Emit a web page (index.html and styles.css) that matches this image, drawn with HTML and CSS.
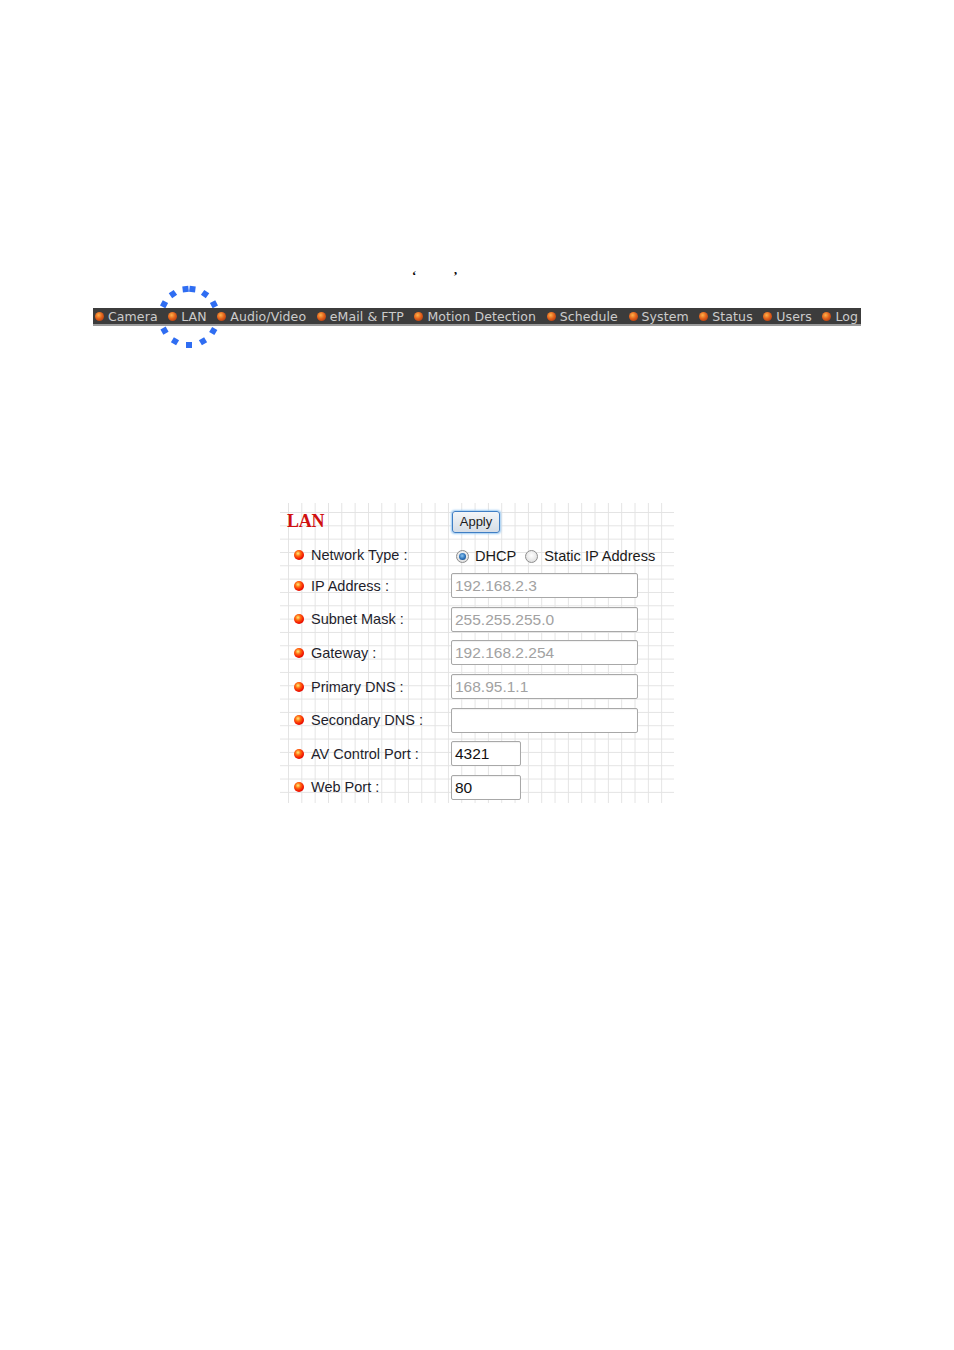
FILE: index.html
```html
<!DOCTYPE html>
<html>
<head>
<meta charset="utf-8">
<link rel="stylesheet" href="styles.css">
</head>
<body>
<div class="page">
  <div class="quotes"><span>‘</span><span>’</span></div>

  <div class="navwrap">
    <svg class="ring" width="70" height="70" viewBox="-35 -35 70 70">
      <g fill="#2f6df2">
        <rect x="25" y="-3" width="6" height="6" transform="rotate(-27)"/>
        <rect x="25" y="-3" width="6" height="6" transform="rotate(-55)"/>
        <rect x="25" y="-3" width="6" height="6" transform="rotate(-83)"/>
        <rect x="25" y="-3" width="6" height="6" transform="rotate(-97)"/>
        <rect x="25" y="-3" width="6" height="6" transform="rotate(-125)"/>
        <rect x="25" y="-3" width="6" height="6" transform="rotate(-153)"/>
        <rect x="25" y="-3" width="6" height="6" transform="rotate(-209)"/>
        <rect x="25" y="-3" width="6" height="6" transform="rotate(-240)"/>
        <rect x="25" y="-3" width="6" height="6" transform="rotate(-270)"/>
        <rect x="25" y="-3" width="6" height="6" transform="rotate(-300)"/>
        <rect x="25" y="-3" width="6" height="6" transform="rotate(-330)"/>
      </g>
    </svg>
    <nav class="nav">
      <span class="nav-item"><i class="ball"></i>Camera</span>
      <span class="nav-item"><i class="ball"></i>LAN</span>
      <span class="nav-item"><i class="ball"></i>Audio/Video</span>
      <span class="nav-item"><i class="ball"></i>eMail &amp; FTP</span>
      <span class="nav-item"><i class="ball"></i>Motion Detection</span>
      <span class="nav-item"><i class="ball"></i>Schedule</span>
      <span class="nav-item"><i class="ball"></i>System</span>
      <span class="nav-item"><i class="ball"></i>Status</span>
      <span class="nav-item"><i class="ball"></i>Users</span>
      <span class="nav-item"><i class="ball"></i>Log</span>
    </nav>
  </div>

  <div class="panel">
    <div class="title">LAN</div>
    <div class="val"><button class="apply">Apply</button></div>

    <div class="dot-cell"><i class="dot"></i></div>
    <div class="label">Network Type :</div>
    <div class="val radios">
      <span class="radio checked"></span><span class="rtext">DHCP</span>
      <span class="radio"></span><span class="rtext">Static IP Address</span>
    </div>

    <div class="dot-cell"><i class="dot"></i></div>
    <div class="label">IP Address :</div>
    <div class="val"><div class="field wide muted">192.168.2.3</div></div>

    <div class="dot-cell"><i class="dot"></i></div>
    <div class="label">Subnet Mask :</div>
    <div class="val"><div class="field wide muted">255.255.255.0</div></div>

    <div class="dot-cell"><i class="dot"></i></div>
    <div class="label">Gateway :</div>
    <div class="val"><div class="field wide muted">192.168.2.254</div></div>

    <div class="dot-cell"><i class="dot"></i></div>
    <div class="label">Primary DNS :</div>
    <div class="val"><div class="field wide muted">168.95.1.1</div></div>

    <div class="dot-cell"><i class="dot"></i></div>
    <div class="label">Secondary DNS :</div>
    <div class="val"><div class="field wide"></div></div>

    <div class="dot-cell"><i class="dot"></i></div>
    <div class="label">AV Control Port :</div>
    <div class="val"><div class="field short">4321</div></div>

    <div class="dot-cell"><i class="dot"></i></div>
    <div class="label">Web Port :</div>
    <div class="val"><div class="field short">80</div></div>
  </div>
</div>
</body>
</html>
```

FILE: styles.css
```css
html, body {
  margin: 0;
  padding: 0;
  background: #ffffff;
}

.page {
  font-family: "Liberation Sans", Arial, sans-serif;
  color: #222;
}

.quotes {
  margin-top: 269px;
  height: 14px;
  padding-left: 412px;
  display: flex;
  gap: 37px;
  font-family: "Liberation Serif", serif;
  font-weight: bold;
  font-size: 13px;
  line-height: 14px;
  color: #000;
}

.navwrap {
  position: relative;
  margin-top: 25px;
  margin-left: 93px;
  width: 768px;
}

.ring {
  position: absolute;
  left: 61px;
  top: -26px;
  z-index: 0;
}

.nav {
  position: relative;
  z-index: 1;
  display: flex;
  align-items: center;
  gap: 10.6px;
  height: 16px;
  padding-left: 2px;
  background: #3c3c3c;
  border-bottom: 2px solid #9a9a9a;
  font-family: "DejaVu Sans", Verdana, sans-serif;
  font-size: 12.5px;
  letter-spacing: 0.1px;
  color: #cccccc;
  white-space: nowrap;
  overflow: hidden;
}

.nav-item {
  display: flex;
  align-items: center;
  gap: 4px;
  line-height: 16px;
  padding-top: 2px;
}

.ball {
  display: inline-block;
  width: 9px;
  height: 9px;
  margin-top: -2px;
  border-radius: 50%;
  background: radial-gradient(circle at 40% 35%, #ffb24a 0%, #e2621c 45%, #9e2a0a 100%);
}

.panel {
  margin-top: 177px;
  margin-left: 280px;
  width: 394px;
  height: 300px;
  display: grid;
  grid-template-columns: 31px 140px 1fr;
  grid-template-rows: 37px 29px repeat(7, 33.6px);
  align-items: center;
  background-color: #fff;
  background-image:
    linear-gradient(to right, #e3e3e3 1px, transparent 1px),
    linear-gradient(to bottom, #e3e3e3 1px, transparent 1px);
  background-size: 13.33px 13.33px;
  background-position: 8px 9px;
}

.title {
  grid-column: 1 / 3;
  padding-left: 7px;
  font-family: "Liberation Serif", "Times New Roman", serif;
  font-weight: bold;
  font-size: 18px;
  color: #d01010;
  letter-spacing: -0.3px;
}

.apply {
  margin-left: 1px;
  width: 48px;
  height: 22px;
  padding: 0;
  font-family: "Liberation Sans", Arial, sans-serif;
  font-size: 13px;
  color: #1a1a1a;
  background: linear-gradient(#f3f5f7, #d5dde6);
  border: 1px solid #3f7ec4;
  border-radius: 3px;
  box-shadow: 0 0 2px 1px #9ccaf2;
}

.dot-cell {
  display: flex;
  justify-content: flex-end;
  padding-right: 7px;
}

.dot {
  display: block;
  width: 10px;
  height: 10px;
  border-radius: 50%;
  background: radial-gradient(circle at 40% 35%, #fff07a 0%, #ff6a10 30%, #f01000 65%, #b00000 100%);
}

.label {
  font-size: 14.5px;
  color: #1e1e2c;
  white-space: nowrap;
}

.val {
  display: flex;
  align-items: center;
}

.radios {
  padding-left: 5px;
  padding-top: 3px;
  font-size: 14.6px;
  color: #1a1a1a;
}

.radio {
  box-sizing: border-box;
  width: 13px;
  height: 13px;
  border-radius: 50%;
  border: 1px solid #8e8e8e;
  background: radial-gradient(circle at 50% 40%, #ffffff 0%, #d6d6d6 100%);
  display: flex;
  align-items: center;
  justify-content: center;
}

.radio.checked::after {
  content: "";
  width: 7px;
  height: 7px;
  border-radius: 50%;
  background: radial-gradient(circle at 45% 40%, #8cc6f2 0%, #2a6fb6 55%, #0e3a6e 100%);
}

.rtext {
  margin-left: 6px;
  margin-right: 9px;
}

.field {
  box-sizing: border-box;
  height: 25px;
  border: 1px solid #a8a8a8;
  border-radius: 2px;
  background: #fff;
  box-shadow: inset 0 1px 1px rgba(0,0,0,0.06);
  padding-left: 3px;
  font-size: 15.5px;
  line-height: 23px;
  color: #111;
}

.field.wide {
  width: 187px;
}

.field.short {
  width: 70px;
}

.field.muted {
  color: #a2a2a2;
}
```
